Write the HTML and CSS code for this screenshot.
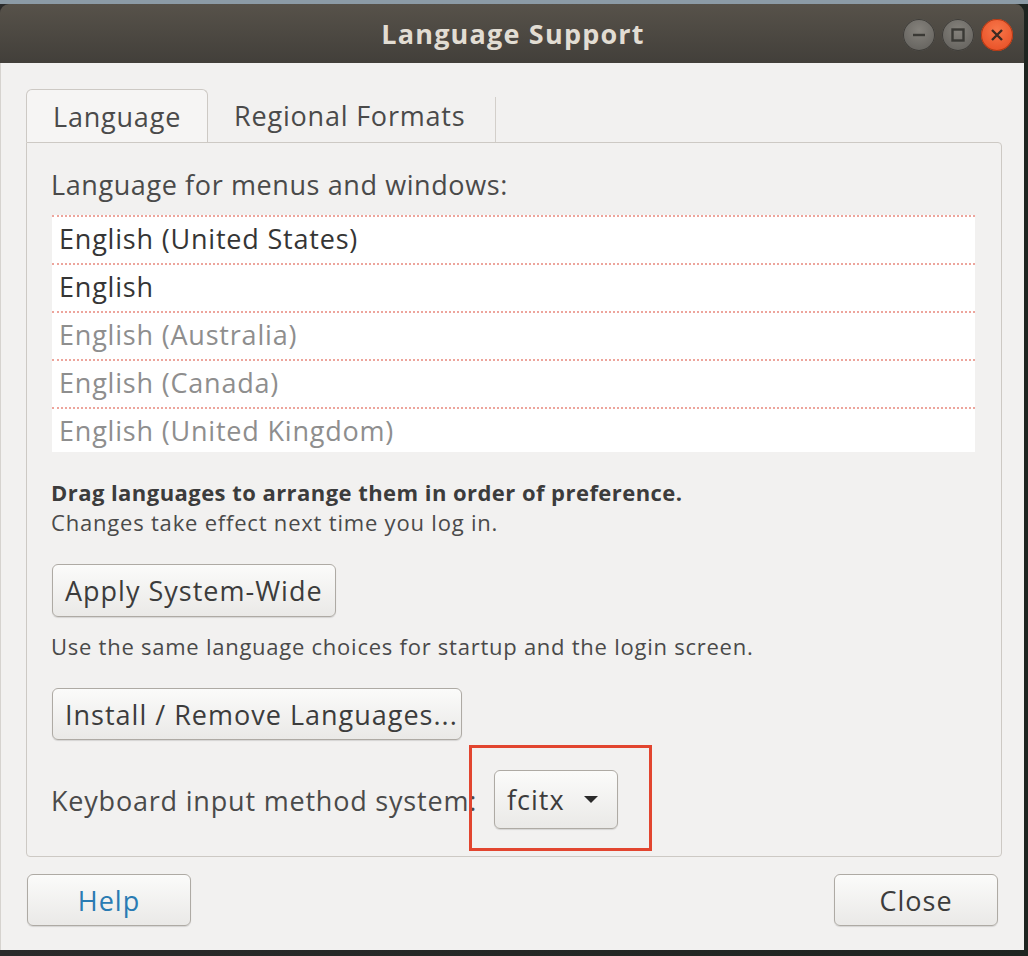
FILE: index.html
```html
<!DOCTYPE html>
<html>
<head>
<meta charset="utf-8">
<link rel="stylesheet" href="styles.css">
</head>
<body>
<div class="screen">
  <div class="topstrip"></div>
  <div class="win">
    <div class="titlebar">
      <div class="title">Language Support</div>
      <div class="wbtns">
        <span class="wbtn"><svg width="32" height="32" viewBox="0 0 32 32"><line x1="10" y1="16" x2="22" y2="16" stroke="#3a3935" stroke-width="2.4"/></svg></span>
        <span class="wbtn"><svg width="32" height="32" viewBox="0 0 32 32"><rect x="10.5" y="10.5" width="11" height="11" fill="none" stroke="#3a3935" stroke-width="2.4"/></svg></span>
        <span class="wbtn close"><svg width="32" height="32" viewBox="0 0 32 32"><path d="M11 11 L21 21 M21 11 L11 21" stroke="#3b2a22" stroke-width="2.4"/></svg></span>
      </div>
    </div>
    <div class="content">
      <div class="tabs">
        <div class="tab active">Language</div>
        <div class="tab">Regional Formats</div>
      </div>
      <div class="panel">
        <div class="label">Language for menus and windows:</div>
        <div class="list">
          <div class="row dark">English (United States)</div>
          <div class="row dark">English</div>
          <div class="row">English (Australia)</div>
          <div class="row">English (Canada)</div>
          <div class="row">English (United Kingdom)</div>
        </div>
        <div class="hint">
          <div class="bold">Drag languages to arrange them in order of preference.</div>
          <div>Changes take effect next time you log in.</div>
        </div>
        <div class="btn apply">Apply System-Wide</div>
        <div class="note">Use the same language choices for startup and the login screen.</div>
        <div class="btn install">Install / Remove Languages...</div>
        <div class="kbrow">
          <span class="kblabel">Keyboard input method system:</span>
          <span class="combo">fcitx <svg width="16" height="9" viewBox="0 0 16 9"><path d="M1 1 L15 1 L8 8 Z" fill="#2a2a2a"/></svg></span>
        </div>
      </div>
      <div class="actions">
        <div class="btn help">Help</div>
        <div class="btn closebtn">Close</div>
      </div>
    </div>
    <div class="highlight"></div>
  </div>
</div>
</body>
</html>
```

FILE: styles.css
```css
html, body {
  margin: 0;
  padding: 0;
}
body {
  background: #262626;
  font-family: "Open Sans", "Noto Sans", sans-serif;
}
.screen {
  width: 1028px;
  height: 956px;
  overflow: hidden;
  background: linear-gradient(90deg, #2a2a2a, #1e2420);
}
.topstrip {
  height: 4px;
  background: #8c9ba6;
}
.win {
  position: relative;
  width: 1024px;
  height: 946px;
}
.titlebar {
  height: 59px;
  border-radius: 9px 9px 0 0;
  background: linear-gradient(#57524a, #423f3a);
  position: relative;
  display: flex;
  align-items: center;
  justify-content: center;
}
.title {
  color: #e2ddd3;
  font-size: 27px;
  font-weight: 700;
  letter-spacing: 1.2px;
  margin-left: 2px;
}
.wbtns {
  position: absolute;
  right: 11px;
  top: 15px;
  display: flex;
  gap: 7px;
}
.wbtn {
  width: 32px;
  height: 32px;
  border-radius: 50%;
  background: radial-gradient(circle at 50% 35%, #85827c, #5e5c58);
  box-shadow: inset 0 0 0 1px #3f3d39;
  display: block;
}
.wbtn svg { display: block; }
.wbtn.close {
  background: radial-gradient(circle at 50% 35%, #f7774a, #e5481f);
  box-shadow: inset 0 0 0 1px #b03a16;
}
.content {
  height: 887px;
  background: #f2f1f0;
  border-left: 1px solid #d6d3cf;
  box-sizing: border-box;
  padding-top: 26px;
}
.tabs {
  display: flex;
  margin-left: 25px;
  height: 53px;
}
.tab {
  font-size: 27px;
  letter-spacing: 0.8px;
  color: #4a4a4a;
  line-height: 53px;
  box-sizing: border-box;
  height: 53px;
}
.tab.active {
  width: 182px;
  padding-left: 26px;
  border: 1px solid #cdc9c4;
  border-bottom: none;
  border-radius: 6px 6px 0 0;
  background: #f6f5f4;
  position: relative;
  z-index: 1;
}
.tab:not(.active) {
  width: 288px;
  padding-left: 26px;
  border-right: 1px solid #d3cfca;
  margin-top: 8px;
  height: 45px;
  line-height: 37px;
}
.panel {
  margin: 0 22px 0 25px;
  border: 1px solid #cdc9c4;
  border-radius: 0 4px 4px 4px;
  padding: 0 26px 27px 25px;
  background: #f2f1f0;
}
.label {
  margin-top: 24px;
  margin-left: -1px;
  height: 36px;
  line-height: 36px;
  font-size: 27px;
  letter-spacing: 0.6px;
  color: #4a4a4a;
}
.list {
  margin-top: 12px;
  height: 237px;
  overflow: hidden;
  background: #ffffff;
}
.row {
  height: 48px;
  box-sizing: border-box;
  border-top: 2px dotted #eda59c;
  padding-left: 7px;
  font-size: 27px;
  letter-spacing: 0.8px;
  line-height: 44px;
  color: #8e8e8e;
}
.row.dark {
  color: #353535;
}
.hint {
  margin-top: 25px;
  margin-left: -1px;
  font-size: 22px;
  letter-spacing: 0.8px;
  line-height: 30px;
  color: #4a4a4a;
}
.bold {
  font-weight: 700;
  letter-spacing: 0.45px;
  color: #3c3c3c;
}
.btn {
  box-sizing: border-box;
  border: 1px solid #aeaaa4;
  border-radius: 6px;
  background: linear-gradient(#fbfbfa, #eae9e7);
  box-shadow: 0 1px 1px rgba(0,0,0,0.12);
  font-size: 27px;
  letter-spacing: 1px;
  color: #3c3c3c;
  display: flex;
  align-items: center;
}
.apply {
  margin-top: 27px;
  width: 284px;
  height: 53px;
  padding-left: 12px;
}
.note {
  margin-top: 14px;
  margin-left: -1px;
  font-size: 22px;
  letter-spacing: 0.75px;
  line-height: 30px;
  color: #4a4a4a;
}
.install {
  margin-top: 27px;
  width: 410px;
  height: 52px;
  padding-left: 12px;
}
.kbrow {
  margin-top: 30px;
  height: 59px;
  display: flex;
  align-items: center;
}
.kblabel {
  font-size: 27px;
  letter-spacing: 0.8px;
  color: #4a4a4a;
  width: 442px;
  margin-left: -1px;
  margin-right: 1px;
  margin-top: 2px;
  white-space: nowrap;
}
.combo {
  box-sizing: border-box;
  width: 124px;
  height: 59px;
  border: 1px solid #aeaaa4;
  border-radius: 6px;
  background: linear-gradient(#fbfbfa, #eae9e7);
  box-shadow: 0 1px 1px rgba(0,0,0,0.12);
  font-size: 27px;
  letter-spacing: 1px;
  color: #3c3c3c;
  display: flex;
  align-items: center;
  padding-left: 12px;
  gap: 18px;
}
.actions {
  margin-top: 17px;
  display: flex;
  justify-content: space-between;
  padding: 0 26px 0 26px;
}
.help, .closebtn {
  width: 164px;
  height: 52px;
  justify-content: center;
}
.help {
  color: #2a7bb3;
}
.highlight {
  position: absolute;
  left: 469px;
  top: 741px;
  width: 183px;
  height: 106px;
  box-sizing: border-box;
  border: 3px solid #e2452f;
}
```
